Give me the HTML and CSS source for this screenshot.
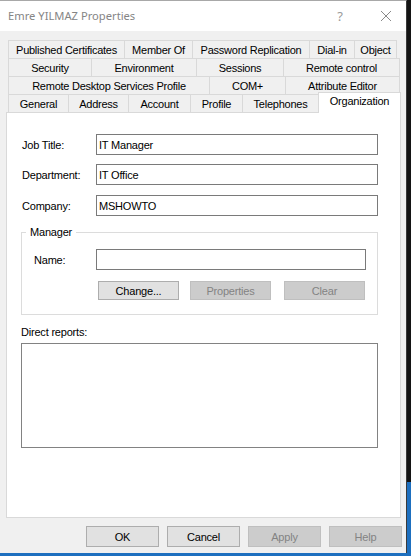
FILE: index.html
```html
<!DOCTYPE html>
<html>
<head>
<meta charset="utf-8">
<link rel="stylesheet" href="styles.css">
</head>
<body>
<div class="window">
  <div class="titlebar">
    <span class="title">Emre YILMAZ Properties</span>
    <span class="help">?</span>
    <svg class="close" width="12" height="12" viewBox="0 0 12 12"><path d="M1 1 L11 11 M11 1 L1 11" stroke="#8a8a8a" stroke-width="1" fill="none"/></svg>
  </div>
  <div class="tabs">
    <div class="tabrow">
      <div class="tab w117">Published Certificates</div>
      <div class="tab w69">Member Of</div>
      <div class="tab w118">Password Replication</div>
      <div class="tab w46">Dial-in</div>
      <div class="tab w43">Object</div>
    </div>
    <div class="tabrow">
      <div class="tab w84">Security</div>
      <div class="tab w106">Environment</div>
      <div class="tab w88">Sessions</div>
      <div class="tab w117">Remote control</div>
    </div>
    <div class="tabrow">
      <div class="tab w202">Remote Desktop Services Profile</div>
      <div class="tab w77">COM+</div>
      <div class="tab w115">Attribute Editor</div>
    </div>
    <div class="tabrow front">
      <div class="tab w61">General</div>
      <div class="tab w61">Address</div>
      <div class="tab w63">Account</div>
      <div class="tab w53">Profile</div>
      <div class="tab w77">Telephones</div>
      <div class="tab selected w83">Organization</div>
    </div>
  </div>
  <div class="panel">
    <div class="field">
      <span class="label">Job Title:</span>
      <div class="input wide">IT Manager</div>
    </div>
    <div class="field">
      <span class="label">Department:</span>
      <div class="input wide">IT Office</div>
    </div>
    <div class="field">
      <span class="label">Company:</span>
      <div class="input wide">MSHOWTO</div>
    </div>
    <fieldset class="group">
      <legend>Manager</legend>
      <div class="field name">
        <span class="label short">Name:</span>
        <div class="input narrow"></div>
      </div>
      <div class="grouprow">
        <div class="btn small">Change...</div>
        <div class="btn small disabled gap11">Properties</div>
        <div class="btn small disabled gap13">Clear</div>
      </div>
    </fieldset>
    <div class="dr-label">Direct reports:</div>
    <div class="listbox"></div>
  </div>
  <div class="footer">
    <div class="btn big">OK</div>
    <div class="btn big">Cancel</div>
    <div class="btn big disabled">Apply</div>
    <div class="btn big disabled">Help</div>
  </div>
</div>
</body>
</html>
```
FILE: styles.css
```css
html, body {
  margin: 0;
  padding: 0;
}
body {
  width: 411px;
  height: 556px;
  overflow: hidden;
  background: linear-gradient(to bottom, #141414 0, #141414 482px, #1d6fbf 482px, #1d6fbf 100%);
  font-family: "Liberation Sans", Arial, sans-serif;
  font-size: 11px;
  letter-spacing: -0.2px;
  color: #000;
}
.window {
  width: 407px;
  height: 553px;
  box-sizing: border-box;
  background: #f0f0f0;
  border-top: 1px solid #a8a8a8;
  border-right: 1px solid #3a3a3a;
  display: flex;
  flex-direction: column;
}
.titlebar {
  height: 30px;
  background: #fff;
  display: flex;
  align-items: center;
  padding-left: 8px;
  flex: none;
}
.title {
  font-family: "Noto Sans", "Open Sans", sans-serif;
  font-size: 11.2px;
  letter-spacing: 0;
  color: #858585;
  flex: 1;
  padding-bottom: 1px;
}
.help {
  font-family: "Noto Sans", sans-serif;
  font-size: 13px;
  color: #9a9a9a;
  letter-spacing: 0;
  margin-right: 37px;
  padding-bottom: 1px;
}
.close {
  margin-right: 14px;
  display: block;
}
.tabs {
  margin-top: 9px;
  padding-left: 8px;
  flex: none;
}
.tabrow {
  display: flex;
  align-items: flex-start;
}
.tabrow + .tabrow {
  margin-top: -1px;
}
.tab {
  box-sizing: border-box;
  height: 19px;
  border: 1px solid #d9d9d9;
  background: #f0f0f0;
  display: flex;
  align-items: center;
  justify-content: center;
  white-space: nowrap;
  flex: none;
  letter-spacing: -0.25px;
}
.tab + .tab {
  margin-left: -1px;
}
.front .tab {
  height: 18px;
  border-bottom: none;
}
.front .tab.selected {
  height: 21px;
  margin-top: -2px;
  margin-bottom: -1px;
  background: #fff;
  position: relative;
  z-index: 1;
  padding-bottom: 4px;
}
.w43 { width: 43px; }
.w46 { width: 46px; }
.w53 { width: 53px; }
.w61 { width: 61px; }
.w63 { width: 63px; }
.w69 { width: 69px; }
.w77 { width: 77px; }
.w83 { width: 83px; }
.w84 { width: 84px; }
.w88 { width: 88px; }
.w106 { width: 106px; }
.w115 { width: 115px; }
.w117 { width: 117px; }
.w118 { width: 118px; }
.w202 { width: 202px; }
.panel {
  box-sizing: border-box;
  margin-left: 6px;
  width: 395px;
  height: 406px;
  background: #fff;
  border: 1px solid #d9d9d9;
  padding: 21px 0 0 15px;
  flex: none;
}
.field {
  display: flex;
  align-items: center;
  height: 21px;
}
.field + .field {
  margin-top: 9px;
}
.field + .field + .field {
  margin-top: 10px;
}
.label {
  width: 74px;
  flex: none;
}
.label.short {
  width: 62px;
}
.input {
  box-sizing: border-box;
  height: 21px;
  border: 1px solid #7a7a7a;
  background: #fff;
  padding-left: 2px;
  display: flex;
  align-items: center;
  flex: none;
}
.input.wide {
  width: 282px;
}
.input.narrow {
  width: 270px;
}
.group {
  margin: 10px 0 0 -1px;
  width: 357px;
  box-sizing: border-box;
  border: 1px solid #dcdcdc;
  padding: 10px 0 14px 12px;
  min-width: 0;
}
.group legend {
  margin-left: -8px;
  padding: 0 4px;
  line-height: 13px;
}
.group .field.name + .grouprow {
  margin-top: 11px;
}
.grouprow {
  display: flex;
  padding-left: 64px;
}
.btn {
  box-sizing: border-box;
  border: 1px solid #adadad;
  background: #e1e1e1;
  display: flex;
  align-items: center;
  justify-content: center;
  flex: none;
}
.btn.disabled {
  border-color: #bfbfbf;
  background: #cccccc;
  color: #838383;
}
.btn.small {
  width: 81px;
  height: 19px;
}
.gap11 { margin-left: 11px; }
.gap13 { margin-left: 13px; }
.dr-label {
  margin: 11px 0 0 -1px;
  line-height: 13px;
}
.listbox {
  box-sizing: border-box;
  margin: 4px 0 0 -1px;
  width: 357px;
  height: 105px;
  border: 1px solid #828282;
  background: #fff;
}
.footer {
  display: flex;
  gap: 8px;
  margin-top: 8px;
  padding-left: 86px;
  flex: none;
}
.btn.big {
  width: 73px;
  height: 21px;
}
```
